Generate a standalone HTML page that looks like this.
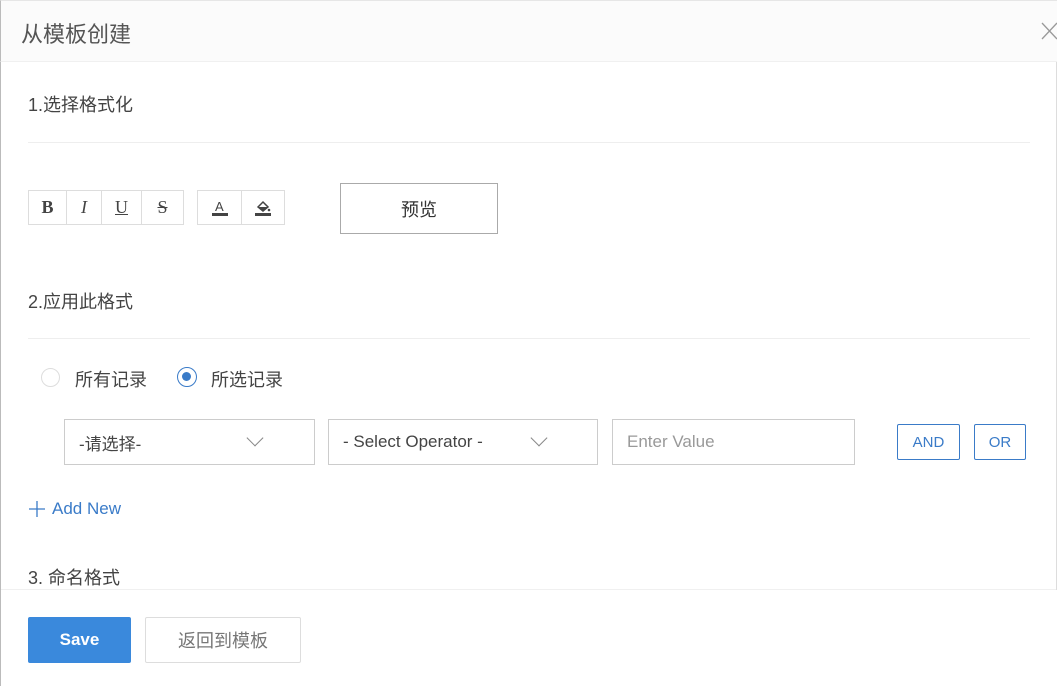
<!DOCTYPE html>
<html><head><meta charset="utf-8"><style>
*{box-sizing:border-box;margin:0;padding:0}
body{width:1057px;height:686px;background:#fff;font-family:"Liberation Sans","Noto Sans CJK SC",sans-serif;position:relative;overflow:hidden;color:#444}
.a{position:absolute}
.hdr{left:0;top:0;width:1057px;height:62px;background:#fbfbfb;border-bottom:1px solid #f0f0f0;border-left:1px solid #bbb;border-top:1px solid #e6e6e6}
.line{height:1px;background:#eee}
.tb{display:flex;border:1px solid #ddd;height:35px;top:190px}
.tb div{border-right:1px solid #ddd;display:flex;align-items:center;justify-content:center;font-family:"Liberation Serif",serif;font-size:18px;color:#444}
.tb div:last-child{border-right:none}
.sel{border:1px solid #ccc;height:46px;top:419px;font-size:17px;color:#444;display:flex;align-items:center;padding-left:14px}
.chev{position:absolute;top:12px;width:12px;height:12px;border-right:1.3px solid #888;border-bottom:1.3px solid #888;transform:rotate(45deg)}
.lb{border:1px solid #3a7bc8;color:#3a7bc8;font-size:15px;display:flex;align-items:center;justify-content:center;border-radius:2px;top:424px;height:36px}
.t{font-size:18px}
</style></head><body>
<div class="a" style="left:0;top:0;width:1px;height:686px;background:#bbb"></div>
<div class="a" style="right:0;top:62px;width:1px;height:528px;background:#ddd"></div>
<div class="a hdr"></div>
<div class="a" style="left:21px;top:17px;font-size:22px;color:#555">从模板创建</div>
<svg class="a" style="left:1041px;top:22px" width="16" height="18"><path d="M1 1L16 17M16 1L1 17" stroke="#999" stroke-width="1.3"/></svg>
<div class="a t" style="left:28px;top:91px">1.选择格式化</div>
<div class="a line" style="left:28px;top:142px;width:1002px"></div>
<div class="a tb" style="left:28px;width:156px">
<div style="width:38px;font-weight:bold">B</div><div style="width:35px;font-style:italic">I</div><div style="width:40px;text-decoration:underline">U</div><div style="flex:1;text-decoration:line-through">S</div></div>
<div class="a tb" style="left:197px;width:88px">
<div style="width:44px"><svg width="18" height="18"><text x="4" y="12" font-size="13" font-family="Liberation Sans" fill="#444">A</text><rect x="1" y="14" width="16" height="3" fill="#444"/></svg></div>
<div style="flex:1"><svg width="18" height="18"><path d="M4 8L9 3L14 8L9 12Z" fill="none" stroke="#444" stroke-width="1.5"/><path d="M4 8L14 8L9 12Z" fill="#444"/><circle cx="15" cy="11" r="1.3" fill="#444"/><rect x="1" y="14" width="16" height="3" fill="#444"/></svg></div></div>
<div class="a" style="left:340px;top:183px;width:158px;height:51px;border:1px solid #aaa;display:flex;align-items:center;justify-content:center;font-size:18px;color:#333">预览</div>
<div class="a t" style="left:28px;top:288px">2.应用此格式</div>
<div class="a line" style="left:28px;top:338px;width:1002px"></div>
<div class="a" style="left:41px;top:368px;width:19px;height:19px;border:1px solid #ddd;border-radius:50%"></div>
<div class="a t" style="left:75px;top:366px">所有记录</div>
<div class="a" style="left:177px;top:367px;width:20px;height:20px;border:1.5px solid #3a7bc8;border-radius:50%"><div style="margin:4px;width:9px;height:9px;border-radius:50%;background:#3a7bc8"></div></div>
<div class="a t" style="left:211px;top:366px">所选记录</div>
<div class="a sel" style="left:64px;width:251px">-请选择-<div class="chev" style="left:184px"></div></div>
<div class="a sel" style="left:328px;width:270px">- Select Operator -<div class="chev" style="left:204px"></div></div>
<div class="a sel" style="left:612px;width:243px;color:#999">Enter Value</div>
<div class="a lb" style="left:897px;width:63px">AND</div>
<div class="a lb" style="left:974px;width:52px">OR</div>
<svg class="a" style="left:28px;top:500px" width="18" height="18"><path d="M9 1V17M1 9H17" stroke="#3a7bc8" stroke-width="1.3"/></svg>
<div class="a" style="left:52px;top:499px;font-size:17px;color:#3a7bc8">Add New</div>
<div class="a t" style="left:28px;top:564px">3. 命名格式</div>
<div class="a line" style="left:1px;top:589px;width:1055px;background:#f0f0f0"></div>
<div class="a" style="left:28px;top:617px;width:103px;height:46px;background:#3a89dc;color:#fff;font-size:17px;font-weight:bold;display:flex;align-items:center;justify-content:center;border-radius:2px">Save</div>
<div class="a" style="left:145px;top:617px;width:156px;height:46px;border:1px solid #ddd;color:#777;font-size:18px;display:flex;align-items:center;justify-content:center;border-radius:2px">返回到模板</div>
</body></html>
